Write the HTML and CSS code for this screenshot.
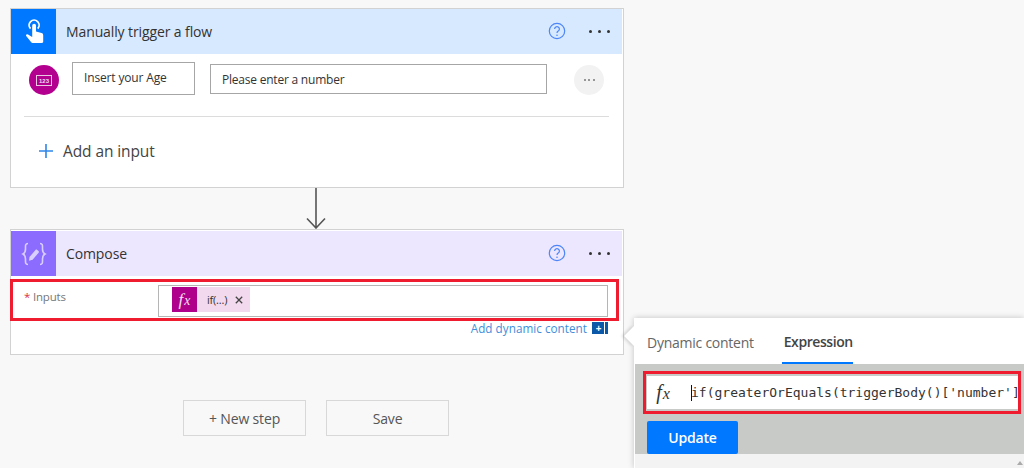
FILE: index.html
```html
<!DOCTYPE html>
<html lang="en">
<head>
<meta charset="utf-8">
<title>Manually trigger a flow</title>
<link rel="stylesheet" href="styles.css">
</head>
<body>
<main class="canvas">
  <section class="card card-trigger">
    <header class="card-head head-blue">
      <div class="head-icon icon-blue">
        <svg width="30" height="30" viewBox="0 0 30 30"><path d="M13.200 20V8.600a1.900 1.900 0 0 1 3.800 0v6l5.600 1.500c1 .3 1.600 1.100 1.600 2.100v6.600c0 .7-.5 1.200-1.200 1.200H13.500c-.5 0-1-.3-1.300-.7l-5-6.300c-.5-.7 0-1.700.9-1.700.3 0 .6 0 .9.2z" fill="#fff"/><path d="M11.500 11.600a5 5 0 1 1 7.200 0" fill="none" stroke="#fff" stroke-width="1.800"/></svg>
      </div>
      <h2 class="head-title">Manually trigger a flow</h2>
      <svg class="help" width="18" height="18" viewBox="0 0 18 18"><circle cx="9" cy="9" r="7.700" fill="none" stroke="#4d86f7" stroke-width="1.200"/><path d="M6.600 7a2.400 2.400 0 1 1 3.600 2.100c-.8.5-1.200.9-1.200 2" fill="none" stroke="#4d86f7" stroke-width="1.200"/><circle cx="9" cy="13.200" r=".8" fill="#4d86f7"/></svg>
      <div class="more"><i></i><i></i><i></i></div>
    </header>
    <div class="input-row">
      <div class="type-circle">
        <svg width="16" height="11" viewBox="0 0 16 11"><rect x=".5" y=".5" width="15" height="10" fill="none" stroke="#e9c6e2" stroke-width="1"/><text x="8" y="7.800" text-anchor="middle" class="num-text">123</text></svg>
      </div>
      <div class="field field-name">Insert your Age</div>
      <div class="field field-hint">Please enter a number</div>
      <div class="row-menu"><i></i><i></i><i></i></div>
    </div>
    <hr class="divider">
    <div class="add-input">
      <svg width="14" height="14" viewBox="0 0 14 14"><path d="M7 0v14M0 7h14" stroke="#2f86e8" stroke-width="1.600"/></svg>
      <span>Add an input</span>
    </div>
  </section>

  <div class="connector">
    <svg width="24" height="41" viewBox="0 0 24 41"><path d="M12 0v40M3 30.500 12 40l9-9.500" fill="none" stroke="#555" stroke-width="1.600"/></svg>
  </div>

  <section class="card card-compose">
    <header class="card-head head-purple">
      <div class="head-icon icon-purple">
        <svg width="28" height="24" viewBox="0 0 28 24"><path d="M8 1.500C5 1.500 5.500 4 5.500 7c0 3-.5 4-2.500 5 2 1 2.500 2 2.500 5 0 3-.5 5.500 2.500 5.500M20 1.500c3 0 2.500 2.500 2.500 5.500 0 3 .5 4 2.500 5-2 1-2.500 2-2.500 5 0 3 .5 5.500-2.500 5.500" fill="none" stroke="#d9cfff" stroke-width="1.600"/><path d="m9.500 15 6-7c.5-.5 1.200-.6 1.700-.1l1.300 1.200c.5.4.5 1.100.1 1.600l-6 7-3.600 1z" fill="#d9cfff"/></svg>
      </div>
      <h2 class="head-title">Compose</h2>
      <svg class="help" width="18" height="18" viewBox="0 0 18 18"><circle cx="9" cy="9" r="7.700" fill="none" stroke="#4d86f7" stroke-width="1.200"/><path d="M6.600 7a2.400 2.400 0 1 1 3.600 2.100c-.8.5-1.200.9-1.200 2" fill="none" stroke="#4d86f7" stroke-width="1.200"/><circle cx="9" cy="13.200" r=".8" fill="#4d86f7"/></svg>
      <div class="more"><i></i><i></i><i></i></div>
    </header>
    <div class="inputs-row">
      <label class="inputs-label"><span class="req">*</span> Inputs</label>
      <div class="token-box">
        <span class="token-fx">f<span class="sub-x">x</span></span>
        <span class="token-body">if(...) <svg width="8" height="8" viewBox="0 0 8 8"><path d="m.8.8 6.400 6.400M7.200.8.8 7.200" stroke="#444" stroke-width="1.300"/></svg></span>
      </div>
    </div>
    <div class="dynamic-row">
      <span class="dynamic-link">Add dynamic content</span>
      <span class="dynamic-btn">+</span>
    </div>
  </section>

  <div class="actions">
    <button class="action">+ New step</button>
    <button class="action">Save</button>
  </div>
</main>

<aside class="panel">
  <span class="caret"></span>
  <nav class="tabs">
    <span class="tab">Dynamic content</span>
    <span class="tab tab-active">Expression</span>
  </nav>
  <div class="editor">
    <div class="expr-box">
      <span class="expr-fx">f<span class="sub-x">x</span></span>
      <div class="expr-input"><span class="cursor"></span>if(greaterOrEquals(triggerBody()['number']</div>
    </div>
    <button class="update">Update</button>
  </div>
  <div class="list-top"><span class="scroll-up"></span></div>
</aside>
</body>
</html>
```
FILE: styles.css
```css
* { box-sizing: border-box; }
html, body { margin: 0; padding: 0; }
body {
  position: relative;
  width: 1024px;
  height: 468px;
  overflow: hidden;
  background: #f8f8f8;
  font-family: "Open Sans", "Noto Sans", sans-serif;
  color: #333;
}
.canvas {
  display: flex;
  flex-direction: column;
  width: 614px;
  margin-left: 10px;
  padding-top: 8px;
}
.card {
  background: #fff;
  border: 1px solid #d2d2d2;
}
.card-trigger { height: 180px; }
.card-compose { height: 126px; padding-top: 1px; }
.card-head {
  display: flex;
  align-items: center;
  height: 45px;
  margin-right: 1px;
}
.head-blue { background: #d7e9ff; }
.head-purple { background: #ece6ff; }
.head-icon {
  display: flex;
  align-items: center;
  justify-content: center;
  width: 45px;
  height: 45px;
}
.icon-blue { background: #0078ff; }
.icon-purple { background: #8c6cff; }
.head-title {
  flex: 1;
  margin: 0 0 0 10px;
  font-size: 14px;
  font-weight: 400;
  letter-spacing: -.11px;
  color: #333;
}
.help { margin-right: 23px; margin-top: -1px; }
.more {
  display: flex;
  gap: 6px;
  margin-right: 12px;
}
.more i {
  width: 3px;
  height: 3px;
  border-radius: 50%;
  background: #333;
}
.input-row {
  display: flex;
  align-items: center;
  height: 41px;
  margin-top: 4px;
  padding-left: 18px;
}
.type-circle {
  display: flex;
  align-items: center;
  justify-content: center;
  flex: none;
  width: 30px;
  height: 30px;
  margin: 3px 13px 0 0;
  border-radius: 50%;
  background: #b3008f;
}
.num-text {
  font-family: "Liberation Sans", sans-serif;
  font-size: 6px;
  font-weight: 700;
  fill: #f3dcef;
}
.field {
  display: flex;
  align-items: center;
  background: #fff;
  font-size: 12px;
  letter-spacing: -.15px;
  padding-left: 11px;
  color: #333;
}
.field-name {
  width: 123px;
  height: 33px;
  margin-right: 15px;
  padding-bottom: 3px;
  border: 1px solid #a6a6a6;
}
.field-hint {
  width: 337px;
  height: 30px;
  margin: 1px 27px 0 0;
  letter-spacing: -.22px;
  border: 1px solid #a6a6a6;
}
.row-menu {
  display: flex;
  align-items: center;
  justify-content: center;
  gap: 2.500px;
  width: 30px;
  height: 30px;
  margin-top: 3px;
  border-radius: 50%;
  background: #f2f2f2;
}
.row-menu i {
  width: 2px;
  height: 2px;
  border-radius: 50%;
  background: #777;
}
.divider {
  height: 1px;
  margin: 17px 14px 0 13px;
  border: 0;
  background: #dcdcdc;
}
.add-input {
  display: flex;
  align-items: center;
  gap: 10px;
  margin-top: 23px;
  padding-left: 28px;
  font-size: 15.500px;
  letter-spacing: -.1px;
  color: #444;
}
.connector {
  display: flex;
  justify-content: center;
  height: 41px;
  padding-right: 2px;
}
.inputs-row {
  display: flex;
  height: 42px;
  margin: 3px 4px 0 -1px;
  border: 3px solid #ee1c2e;
  background: #fff;
}
.inputs-label {
  width: 145px;
  padding: 7px 0 0 11px;
  font-size: 11.500px;
  letter-spacing: -.2px;
  color: #777;
}
.req { color: #d8333f; }
.token-box {
  display: flex;
  width: 450px;
  height: 32px;
  margin-top: 3px;
  padding: 1px 0 0 13px;
  border: 1px solid #b5b5b5;
}
.token-fx {
  display: flex;
  align-items: center;
  justify-content: center;
  width: 25px;
  height: 25px;
  background: #ae008b;
  color: #f6e0f2;
  font-family: "Liberation Serif", serif;
  font-style: italic;
  font-size: 17px;
}
.sub-x { font-size: .8em; margin: 3px 0 0 1px; }
.token-body {
  display: flex;
  align-items: center;
  gap: 8px;
  width: 53px;
  height: 25px;
  padding-left: 10px;
  background: #f2d9ee;
  font-size: 11px;
  letter-spacing: -.2px;
  color: #333;
}
.dynamic-row {
  display: flex;
  align-items: center;
  justify-content: flex-end;
  gap: 5px;
  height: 13px;
  margin: 0 15px 0 0;
}
.dynamic-link {
  font-size: 11.700px;
  letter-spacing: .03px;
  color: #3f8edb;
}
.dynamic-btn {
  display: flex;
  align-items: center;
  justify-content: center;
  width: 16px;
  height: 12px;
  margin-top: 1px;
  background: #0b57a8;
  border-right: 3px solid #0b57a8;
  box-shadow: inset -1px 0 0 #fff;
  color: #fff;
  font-size: 10px;
  font-weight: 700;
  line-height: 1;
}
.actions {
  display: flex;
  gap: 20px;
  margin: 45px 0 0 173px;
}
.action {
  width: 123px;
  height: 36px;
  padding: 0;
  background: #f8f8f8;
  border: 1px solid #d8d8d8;
  font: 400 14px "Open Sans", "Noto Sans", sans-serif;
  letter-spacing: -.15px;
  color: #555;
}
.panel {
  position: absolute;
  left: 634px;
  top: 318px;
  width: 390px;
  height: 150px;
  background: #fff;
  box-shadow: 0 0 6px rgba(0, 0, 0, .22);
}
.caret {
  position: absolute;
  left: -7px;
  top: 11px;
  width: 14px;
  height: 14px;
  background: #fff;
  transform: rotate(45deg);
  box-shadow: -2px 2px 3px rgba(0, 0, 0, .12);
}
.tabs {
  position: relative;
  display: flex;
  height: 46px;
  padding-left: 13px;
  gap: 28px;
}
.tab {
  display: flex;
  align-items: center;
  height: 46px;
  padding-top: 3px;
  font-size: 14px;
  letter-spacing: -.25px;
  color: #666;
}
.tab-active {
  width: 71px;
  justify-content: center;
  padding-left: 2px;
  font-weight: 600;
  letter-spacing: -.42px;
  color: #444;
  border-bottom: 2px solid #0078ff;
}
.editor {
  margin-left: 1px;
  height: 90px;
  padding: 7px 3px 0 8px;
  background: #c8cac8;
}
.expr-box {
  display: flex;
  height: 43px;
  width: 378px;
  padding: 2px 0 2px 1px;
  border: 3px solid #ee1c2e;
  background: #c8cac8;
}
.expr-fx {
  display: flex;
  align-items: center;
  justify-content: center;
  width: 44px;
  padding-right: 12px;
  background: #fff;
  font-family: "Liberation Serif", serif;
  font-style: italic;
  font-size: 20px;
  color: #333;
}
.expr-input {
  display: flex;
  align-items: center;
  flex: 1;
  min-width: 0;
  white-space: nowrap;
  background: #fff;
  font-family: "DejaVu Sans Mono", monospace;
  font-size: 13px;
  color: #333;
}
.cursor {
  flex: none;
  width: 1px;
  height: 16px;
  margin-right: -1px;
  background: #111;
}
.update {
  display: block;
  width: 91px;
  height: 33px;
  margin: 7px 0 0 4px;
  padding: 0;
  border: 0;
  border-radius: 2px;
  background: #0078ff;
  color: #fff;
  font: 600 14px "Open Sans", "Noto Sans", sans-serif;
  letter-spacing: -.2px;
}
.list-top {
  position: relative;
  height: 14px;
  margin-left: 1px;
  background: #f3f3f3;
}
.scroll-up {
  position: absolute;
  right: 1px;
  top: 7px;
  border-left: 3px solid transparent;
  border-right: 3px solid transparent;
  border-bottom: 4px solid #aaa;
}
```
